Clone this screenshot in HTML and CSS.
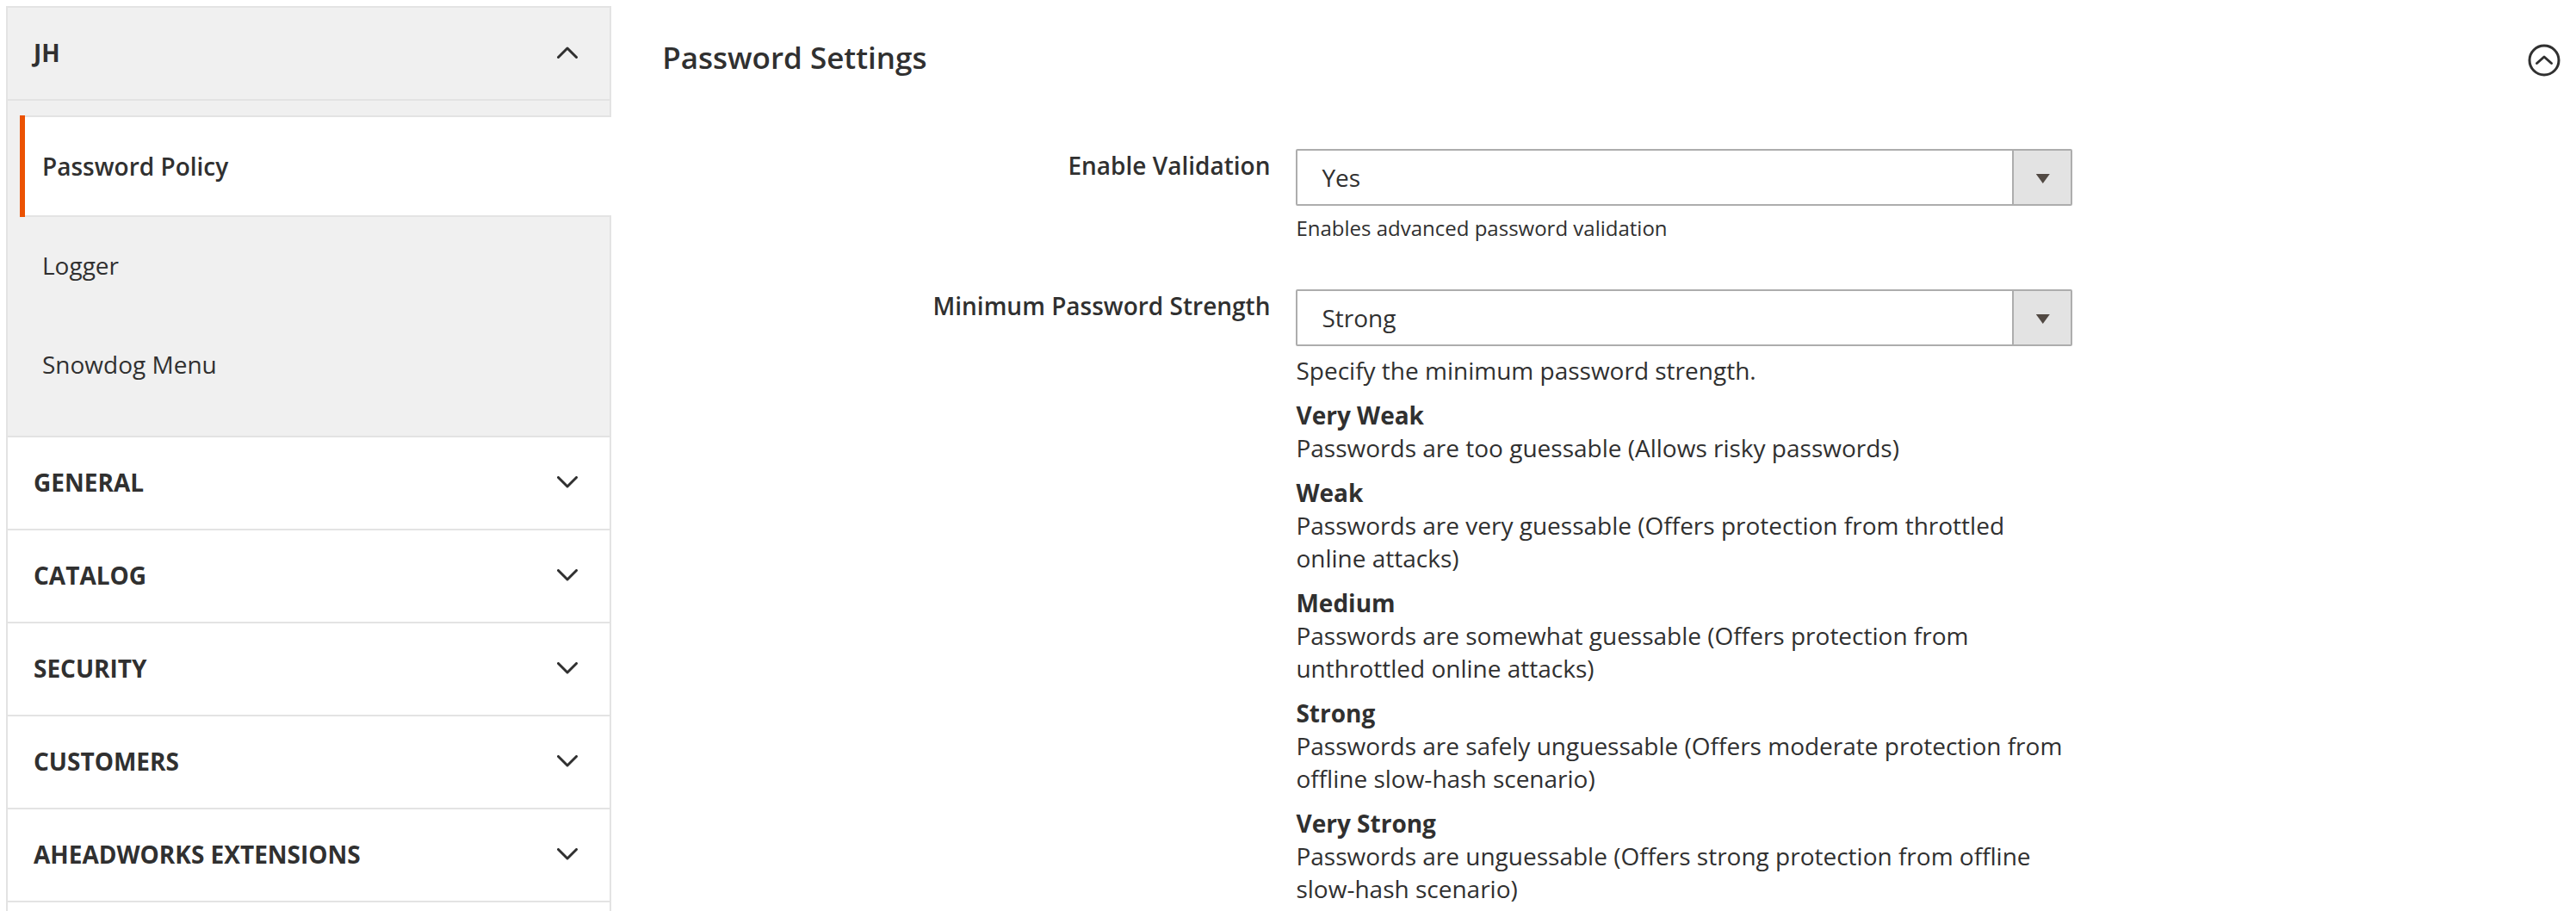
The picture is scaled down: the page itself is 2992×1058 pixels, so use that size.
FILE: index.html
```html
<!DOCTYPE html>
<html lang="en">
<head>
  <meta charset="utf-8">
  <meta name="viewport" content="width=device-width, initial-scale=1">
  <title>Password Settings</title>
  <link rel="stylesheet" href="styles.css">
</head>
<body>
  <div class="page">
    <nav class="sidebar" aria-label="Configuration">
      <section class="group group-open">
        <button class="group-title" type="button" aria-expanded="true">JH
          <svg class="chevron" viewBox="0 0 24 14" aria-hidden="true"><path d="M1.5 12.5 12 2l10.5 10.5"/></svg>
        </button>
        <ul class="group-items">
          <li><a class="item item-active" href="#" aria-current="page">Password Policy</a></li>
          <li><a class="item" href="#">Logger</a></li>
          <li><a class="item" href="#">Snowdog Menu</a></li>
        </ul>
      </section>
      <section class="group">
        <button class="group-title" type="button" aria-expanded="false">General
          <svg class="chevron" viewBox="0 0 24 14" aria-hidden="true"><path d="M1.5 1.5 12 12 22.5 1.5"/></svg>
        </button>
      </section>
      <section class="group">
        <button class="group-title" type="button" aria-expanded="false">Catalog
          <svg class="chevron" viewBox="0 0 24 14" aria-hidden="true"><path d="M1.5 1.5 12 12 22.5 1.5"/></svg>
        </button>
      </section>
      <section class="group">
        <button class="group-title" type="button" aria-expanded="false">Security
          <svg class="chevron" viewBox="0 0 24 14" aria-hidden="true"><path d="M1.5 1.5 12 12 22.5 1.5"/></svg>
        </button>
      </section>
      <section class="group">
        <button class="group-title" type="button" aria-expanded="false">Customers
          <svg class="chevron" viewBox="0 0 24 14" aria-hidden="true"><path d="M1.5 1.5 12 12 22.5 1.5"/></svg>
        </button>
      </section>
      <section class="group">
        <button class="group-title" type="button" aria-expanded="false">Aheadworks Extensions
          <svg class="chevron" viewBox="0 0 24 14" aria-hidden="true"><path d="M1.5 1.5 12 12 22.5 1.5"/></svg>
        </button>
      </section>
    </nav>

    <main class="content">
      <header class="section-head">
        <h1 class="section-title">Password Settings</h1>
        <button class="collapse" type="button" aria-label="Collapse section" aria-expanded="true">
          <svg class="collapse-icon" viewBox="0 0 38 38" aria-hidden="true"><circle cx="19" cy="19" r="17"/><path d="M10.5 22.5 19 15l8.5 7.5"/></svg>
        </button>
      </header>

      <form class="fields">
        <div class="field">
          <label class="label" for="enable">Enable Validation</label>
          <div class="value">
            <div class="select-box">
              <select class="select" id="enable" aria-describedby="enable-note">
                <option selected>Yes</option>
                <option>No</option>
              </select>
            </div>
            <p class="note" id="enable-note">Enables advanced password validation</p>
          </div>
        </div>

        <div class="field">
          <label class="label" for="strength">Minimum Password Strength</label>
          <div class="value">
            <div class="select-box">
              <select class="select" id="strength">
                <option>Very Weak</option>
                <option>Weak</option>
                <option>Medium</option>
                <option selected>Strong</option>
                <option>Very Strong</option>
              </select>
            </div>
            <div class="help">
              <p>Specify the minimum password strength.</p>
              <dl class="levels">
                <div>
                  <dt>Very Weak</dt>
                  <dd>Passwords are too guessable (Allows risky passwords)</dd>
                </div>
                <div>
                  <dt>Weak</dt>
                  <dd>Passwords are very guessable (Offers protection from throttled online attacks)</dd>
                </div>
                <div>
                  <dt>Medium</dt>
                  <dd>Passwords are somewhat guessable (Offers protection from unthrottled online attacks)</dd>
                </div>
                <div>
                  <dt>Strong</dt>
                  <dd>Passwords are safely unguessable (Offers moderate protection from offline slow-hash scenario)</dd>
                </div>
                <div>
                  <dt>Very Strong</dt>
                  <dd>Passwords are unguessable (Offers strong protection from offline slow-hash scenario)</dd>
                </div>
              </dl>
            </div>
          </div>
        </div>
      </form>
    </main>
  </div>
</body>
</html>
```

FILE: styles.css
```css
*,
*::before,
*::after {
  box-sizing: border-box;
}

body {
  margin: 0;
  background: #fff;
  color: #303030;
  font-family: "Open Sans", "Noto Sans", sans-serif;
  font-size: 28px;
  line-height: 38px;
}

h1,
p,
ul,
dl,
dd {
  margin: 0;
  padding: 0;
}

button,
select {
  color: inherit;
  font: inherit;
}

.page {
  display: flex;
  min-height: 100vh;
  padding: 7px 18px 0 7px;
}

/* Sidebar */

.sidebar {
  flex: 0 0 23.7%;
  border: 2px solid #e3e3e3;
  border-bottom: 0;
}

.group {
  border-bottom: 2px solid #e3e3e3;
}

.group-open {
  background: #f0f0f0;
}

.group-title {
  display: flex;
  align-items: center;
  justify-content: space-between;
  width: 100%;
  padding: 33px 37px 35px 30px;
  border: 0;
  background: none;
  font-weight: 700;
  text-align: left;
  text-transform: uppercase;
}

.group-open .group-title {
  border-bottom: 2px solid #e3e3e3;
}

.chevron {
  width: 24px;
  height: 14px;
  fill: none;
  stroke: #303030;
  stroke-width: 3;
  stroke-linecap: round;
  stroke-linejoin: round;
}

.group-items {
  padding: 17px 0 24px 14px;
  list-style: none;
}

.group-items li + li {
  margin-top: -3px;
}

.item {
  display: block;
  padding: 38px 20px;
  border: 2px solid transparent;
  border-left-width: 6px;
  color: inherit;
  text-decoration: none;
}

.item-active {
  margin-right: -2px;
  margin-left: 6px;
  border-color: #e3e3e3;
  border-right-width: 0;
  border-left-width: 0;
  background: #fff;
  box-shadow: -6px 0 #eb5202;
  font-weight: 600;
}

/* Main column */

.content {
  flex: 1;
  min-width: 0;
  padding: 37px 0 0 59px;
}

.section-head {
  display: flex;
  align-items: flex-end;
  justify-content: space-between;
}

.section-title {
  font-size: 35px;
  font-weight: 600;
  line-height: 46px;
}

.collapse {
  display: flex;
  padding: 0 0 1px;
  border: 0;
  background: none;
}

.collapse-icon {
  width: 38px;
  height: 38px;
  fill: none;
  stroke: #303030;
  stroke-width: 3;
  stroke-linecap: round;
  stroke-linejoin: round;
}

.fields {
  display: grid;
  gap: 54px;
  margin-top: 83px;
}

.field {
  display: grid;
  grid-template-columns: 736fr 901fr 567fr;
}

.label {
  padding-right: 30px;
  font-weight: 600;
  text-align: right;
}

.select-box {
  position: relative;
}

.select {
  display: block;
  width: 100%;
  height: 66px;
  padding: 0 98px 0 28px;
  border: 2px solid #adadad;
  border-radius: 2px;
  background: #fff;
  appearance: none;
}

/* Drop-down handle over the right end of the select */
.select-box::before {
  content: "";
  position: absolute;
  top: 2px;
  right: 2px;
  bottom: 2px;
  width: 68px;
  border-left: 2px solid #adadad;
  background: #e3e3e3;
  pointer-events: none;
}

.select-box::after {
  content: "";
  position: absolute;
  top: 29px;
  right: 26px;
  width: 16px;
  height: 11px;
  background: #514943;
  clip-path: polygon(0 0, 100% 0, 50% 100%);
  pointer-events: none;
}

.note {
  margin-top: 9px;
  font-size: 24px;
  line-height: 34px;
}

.help {
  margin-top: 9px;
}

.levels {
  display: grid;
  gap: 14px;
  margin-top: 14px;
}

.levels dt {
  font-weight: 700;
}
```
